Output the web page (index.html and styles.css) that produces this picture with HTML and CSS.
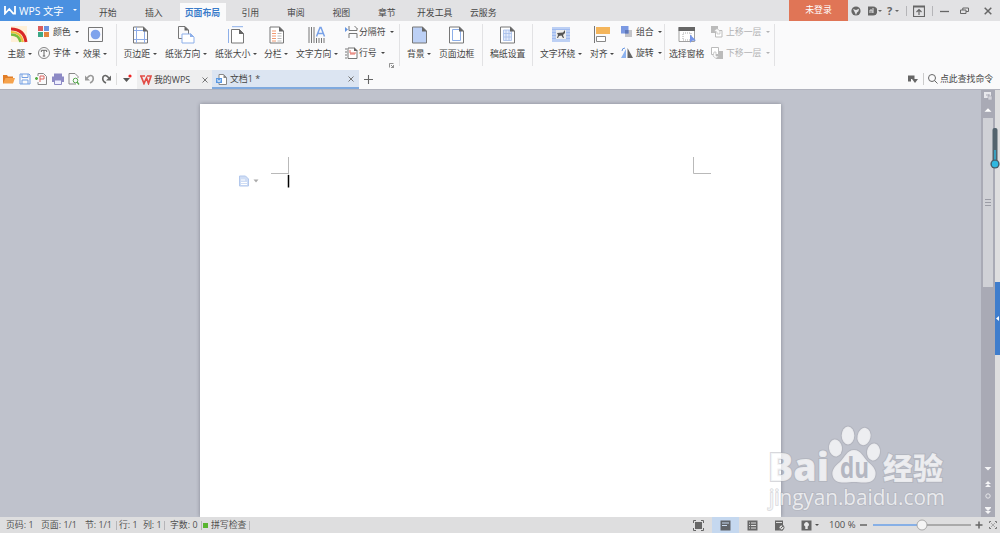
FILE: index.html
```html
<!DOCTYPE html>
<html lang="zh-CN">
<head>
<meta charset="utf-8">
<title>WPS 文字</title>
<link rel="stylesheet" href="styles.css">
</head>
<body>
<div class="app">
  <header class="titlebar">
    <div class="brand">
      <svg width="12" height="9" viewBox="0 0 12 9" fill="none" stroke="#fff" stroke-width="1.8"><path d="M1 0v7.500L5.300 3l4 4.500H11V0"/></svg>
      <span class="brand-name">WPS 文字</span><span class="brand-drop"><i class="arrow"></i></span>
    </div>
    <nav class="menu">
      <a>开始</a><a>插入</a><a class="active">页面布局</a><a>引用</a><a>审阅</a><a>视图</a><a>章节</a><a>开发工具</a><a>云服务</a>
    </nav>
    <div class="login">未登录</div>
    <div class="window-tools">
      <svg width="10" height="10" viewBox="0 0 10 10"><circle cx="5" cy="5" r="4.600" fill="#666"/><path d="M2 3l3 1 3-1.300-.5 2.500L6 6.500 5 9 3.600 6z" fill="#e2e2e4"/></svg>
      <span class="tool"><svg width="9" height="10" viewBox="0 0 9 10"><path d="M0 .500h5a4 4 0 0 1 0 9H0z" fill="#666"/><path d="M2 7V4h2v3M5 7V2" stroke="#e2e2e4" fill="none"/></svg><i class="arrow"></i></span>
      <span class="tool"><b>?</b><i class="arrow"></i></span>
      <i class="bar"></i>
      <svg width="12" height="12" viewBox="0 0 12 12" fill="none" stroke="#666"><path d="M.5 1h11v10.500H.5zM.5 2h11M6 10V4.500M3.500 7L6 4.500 8.500 7" stroke-width="1.200"/></svg>
      <i class="bar"></i>
      <svg width="9" height="10" viewBox="0 0 9 10"><path d="M0 5.500h9" stroke="#666" stroke-width="1.300"/></svg>
      <svg width="9" height="8" viewBox="0 0 9 8" fill="none" stroke="#666"><path d="M.5 3h5.500v3.500H.5zM2.800 3V1h5.700v3.500H6"/></svg>
      <svg width="8" height="8" viewBox="0 0 8 8"><path d="M.7.700l6.600 6.600M7.300.700L.7 7.300" stroke="#666" stroke-width="1.500"/></svg>
    </div>
  </header>

  <section class="ribbon">
    <div class="big"><svg width="17" height="17" viewBox="0 0 17 17" fill="none"><path d="M0 0h16v16H0z" fill="#fff0d8"/><path d="M0 3q13 0 15 13" stroke="#d92727" stroke-width="3"/><path d="M0 6q10 0 12 10" stroke="#f0bc37" stroke-width="2"/><path d="M0 8.500q8 0 9.500 7.500" stroke="#79bd3d" stroke-width="2.500"/></svg><span>主题<i class="arrow"></i></span></div>
    <div class="pair">
      <div class="small"><svg width="12" height="12" viewBox="0 0 12 12"><path d="M0 0h5v5H0z" fill="#d95c5c"/><path d="M6 0h5v5H6z" fill="#6a93e0"/><path d="M0 6h5v5H0z" fill="#3ca887"/><path d="M6 6h5v5H6z" fill="#e3843e"/></svg><span>颜色<i class="arrow"></i></span></div>
      <div class="small"><svg width="12" height="12" viewBox="0 0 12 12" fill="none" stroke="#666"><circle cx="6" cy="6" r="5.500" stroke-width=".8"/><path d="M3.300 5V3.300h5.400V5M6 3.300v6M4.800 9h2.400"/></svg><span>字体<i class="arrow"></i></span></div>
    </div>
    <div class="big"><svg width="17" height="17" viewBox="0 0 17 17"><path d="M1.500 1.500h14v14h-14z" fill="#f9f9fc" stroke="#777"/><circle cx="8.500" cy="8.500" r="4.800" fill="#7fa3ec"/></svg><span>效果<i class="arrow"></i></span></div>
    <i class="sep"></i>
    <div class="big"><svg width="17" height="18" viewBox="0 0 17 18" fill="none"><path d="M1.500 1h10l4 4v12h-14z" fill="#fff" stroke="#777"/><path d="M4.500 1v16M12.500 5v12M2 4.500h10M2 13.500h13" stroke="#8eace8"/><path d="M11 .500v5h5z" fill="#666"/></svg><span>页边距<i class="arrow"></i></span></div>
    <div class="big"><svg width="18" height="18" viewBox="0 0 18 18" fill="none"><path d="M5 12.500H1.500v-12H8l3.500 3.500v4" stroke="#777"/><path d="M7.500 0v4.500H12z" fill="#666"/><path d="M5 8h9l3 3v6H5z" fill="#fff" stroke="#8dafe9"/><path d="M13 7v4h4z" fill="#8dafe9"/></svg><span>纸张方向<i class="arrow"></i></span></div>
    <div class="big"><svg width="18" height="18" viewBox="0 0 18 18" fill="none"><path d="M5 .700h11M1.500 3v14" stroke="#8dafe9"/><path d="M4.500 3.500h8l4 4v9.500h-12z" fill="#fff" stroke="#777"/><path d="M12 3v5h5z" fill="#666"/></svg><span>纸张大小<i class="arrow"></i></span></div>
    <div class="big"><svg width="17" height="18" viewBox="0 0 17 18" fill="none"><path d="M2 1h9.500l4 4v12H2z" fill="#fff" stroke="#777"/><path d="M11 .500v5h5z" fill="#666"/><path d="M4 5h4M4 7.500h4M4 10h4M4 12.500h4M4 15h4" stroke="#f09a72"/><path d="M9.500 7.500h4M9.500 10h4M9.500 12.500h4M9.500 15h4" stroke="#bbb"/></svg><span>分栏<i class="arrow"></i></span></div>
    <div class="big"><svg width="18" height="18" viewBox="0 0 18 18" fill="none"><path d="M1 1v16M3.500 1v16M6 1v16M8.500 12v5M11 12v5M13.500 12v5M16 12v5" stroke="#777"/><path d="M8.500 10.500L12 1.500h1l3.500 9M10 7.500h5" stroke="#79a2e8" stroke-width="1.500"/></svg><span>文字方向<i class="arrow"></i></span></div>
    <div class="pair breaks">
      <div class="small"><svg width="13" height="12" viewBox="0 0 13 12" fill="none"><path d="M0 1l3 2.500L0 6z" fill="#6495e2"/><path d="M4 0v4.500h8V2M9.500 0L12 2.500M4 12V7.500h8V12" stroke="#777"/></svg><span>分隔符<i class="arrow"></i></span></div>
      <div class="small"><svg width="13" height="12" viewBox="0 0 13 12" fill="none"><path d="M3 1h6l3 3v7.500H3z" fill="#fff" stroke="#777"/><path d="M9 0v4h4z" fill="#666"/><path d="M0 2h2M0 5h2M0 8h2M0 11h2" stroke="#777"/><path d="M5 3v3h6M5 7h5" stroke="#e36c62"/></svg><span>行号<i class="arrow"></i></span></div>
      <svg class="launcher" width="5" height="5" viewBox="0 0 5 5"><path d="M.5 4.500v-4h4M2 2l2.500 2.500V2M2 4.500h2.500" fill="none" stroke="#777" stroke-width=".8"/></svg>
    </div>
    <i class="sep"></i>
    <div class="big"><svg width="17" height="18" viewBox="0 0 17 18"><path d="M1.500 1h10l4 4v12h-14z" fill="#bcd0f5" stroke="#777"/><path d="M11 .500v5h5z" fill="#666"/></svg><span>背景<i class="arrow"></i></span></div>
    <div class="big"><svg width="17" height="18" viewBox="0 0 17 18"><path d="M1.500 1h10l4 4v12h-14z" fill="#fff" stroke="#777"/><path d="M4.500 3.500h8v11h-8z" fill="#fff" stroke="#8dafe9"/><path d="M11 .500v5h5z" fill="#666"/></svg><span>页面边框</span></div>
    <i class="sep"></i>
    <div class="big"><svg width="17" height="18" viewBox="0 0 17 18"><path d="M1.500 1h10l4 4v12h-14z" fill="#fff" stroke="#777"/><path d="M4.500 4h8v10.500h-8zM4.500 7.500h8M4.500 11h8M7 4v10.500M10 4v10.500" fill="#e3ebfb" stroke="#a5bdea" stroke-width=".8"/><path d="M11 .500v5h5z" fill="#666"/></svg><span>稿纸设置</span></div>
    <i class="sep"></i>
    <div class="big"><svg width="18" height="17" viewBox="0 0 18 17"><path d="M0 1h18v15H0z" fill="#bdd0f4"/><path d="M0 3.500h18M0 6.500h18M0 9.500h18M0 12.500h18" stroke="#a0bbef"/><path d="M4 4h10v9H4z" fill="#eee"/><path d="M5 7l6-.500L13 4v3l-2 2 1 3h-1L9.500 9.500 7 10l-1 2H5l1-3z" fill="#555"/></svg><span>文字环绕<i class="arrow"></i></span></div>
    <div class="big"><svg width="18" height="17" viewBox="0 0 18 17"><path d="M1.500 0v17" stroke="#777"/><path d="M3 1h14v7H3z" fill="#f4b55b"/><path d="M3.500 10.500h9v5h-9z" fill="#fff" stroke="#888"/></svg><span>对齐<i class="arrow"></i></span></div>
    <div class="pair">
      <div class="small"><svg width="12" height="12" viewBox="0 0 12 12"><path d="M4 4h7v7H4z" fill="#c4c4c8"/><path d="M0 0h7.500v7.500H0z" fill="#7b99e2"/><path d="M4 4h3.500v3.500H4z" fill="#5e77b8"/></svg><span>组合<i class="arrow"></i></span></div>
      <div class="small"><svg width="12" height="12" viewBox="0 0 12 12"><path d="M5 2v9H0z" fill="#8db3f0"/><path d="M6.500 1v10H12z" fill="#666"/><path d="M1 4q0-3 3-3" fill="none" stroke="#6495e2"/></svg><span>旋转<i class="arrow"></i></span></div>
    </div>
    <i class="sep short"></i>
    <div class="big"><svg width="18" height="17" viewBox="0 0 18 17"><path d="M1 1.500h15.500v14H1z" fill="#fff" stroke="#888" stroke-width=".8"/><path d="M.5 1h16.500v4H.5z" fill="#666"/><path d="M5 7h8v7H5z" fill="none" stroke="#aaa" stroke-dasharray="1 1"/><path d="M12 8.500l6 6-4 .200-2 2.300z" fill="#7595e8"/></svg><span>选择窗格</span></div>
    <div class="pair disabled">
      <div class="small"><svg width="12" height="12" viewBox="0 0 12 12"><path d="M0 0h7v7H0z" fill="#bbb"/><path d="M4.500 4.500h6.500v6.500H4.500z" fill="#fff" stroke="#bbb"/><path d="M3 5l3-2.500L9 5v3H6V6z" fill="#fafafa" stroke="#bbb" stroke-width=".7"/></svg><span>上移一层<i class="arrow"></i></span></div>
      <div class="small"><svg width="12" height="12" viewBox="0 0 12 12"><path d="M5 4h7v8H5z" fill="#bbb"/><path d="M.5.500h7v7h-7z" fill="#fff" stroke="#bbb"/><path d="M3 5h2v4h3l-3 2.500L2 9z" fill="#fafafa" stroke="#bbb" stroke-width=".7"/></svg><span>下移一层<i class="arrow"></i></span></div>
    </div>
    <i class="sep"></i>
  </section>

  <section class="tabs">
    <div class="quick">
      <svg width="12" height="12" viewBox="0 0 12 12"><path d="M0 10.500V2h4l1 1.500h5V5" fill="#e17d27"/><path d="M0 10.500L2.500 5H12l-2 5.500z" fill="#f5a34e"/></svg>
      <svg width="12" height="12" viewBox="0 0 12 12" fill="none" stroke="#739fe3"><path d="M1 1h9l1 1v9H1zM3 1v3.500h6V1M3 11V7h6v4"/></svg>
      <svg width="12" height="12" viewBox="0 0 12 12" fill="none"><path d="M3 3V.500h5.500l3 3v8H3V9" stroke="#888"/><path d="M5 9V3h4v3H5" stroke="#de655e"/><path d="M0 5.500h3M1.500 4v3" stroke="#55ae46" stroke-width="1.500"/></svg>
      <svg width="12" height="12" viewBox="0 0 12 12"><path d="M2 .500h8v3H2zM0 3.500h12V9H0z" fill="#8d8ac5"/><path d="M2.500 7h7v4.500h-7z" fill="#eef" stroke="#8d8ac5"/></svg>
      <svg width="12" height="12" viewBox="0 0 12 12" fill="none"><path d="M8 11H1V.500h6l3 3V5" stroke="#888"/><circle cx="7.500" cy="7.500" r="2.300" stroke="#56a64c"/><path d="M9 9l2 2.500" stroke="#56a64c" stroke-width="1.300"/></svg>
      <svg width="12" height="12" viewBox="0 0 12 12" fill="none"><path d="M1 2.500v5h5z" fill="#999"/><path d="M3 5q4-4.500 6-1 1.200 4-3 6" stroke="#999" stroke-width="1.600"/></svg>
      <svg width="12" height="12" viewBox="0 0 12 12" fill="none"><path d="M11 2.500v5H6z" fill="#666"/><path d="M9 5Q5 .500 3 4q-1.200 4 3 6" stroke="#666" stroke-width="1.600"/></svg>
    </div>
    <i class="tab-sep"></i>
    <svg class="more" width="12" height="12" viewBox="0 0 12 12"><path d="M0 5h7L3.500 9z" fill="#555"/><circle cx="7" cy="3" r="1.600" fill="#e22"/></svg>
    <div class="tab home"><svg width="12" height="10" viewBox="0 0 12 10"><path d="M0 1h5M1 1l3 7.500L6.500 3 8.500 8.500 11 1H7" fill="none" stroke="#e24c46" stroke-width="1.700"/></svg><span>我的WPS</span><svg class="close" width="6" height="6" viewBox="0 0 6 6"><path d="M.5.500l5 5M5.500.500l-5 5" stroke="#777"/></svg></div>
    <div class="tab current"><svg width="11" height="11" viewBox="0 0 11 11"><path d="M3 .500h4.500l3 3v7H3z" fill="#fff" stroke="#888"/><path d="M7.500 0v4H11z" fill="#888"/><path d="M0 4h6v5H0z" fill="#5998e2"/><path d="M1.200 5l1 3L3 6l.8 2 1-3" fill="none" stroke="#fff" stroke-width=".6"/></svg><span>文档1 *</span><svg class="close" width="6" height="6" viewBox="0 0 6 6"><path d="M.5.500l5 5M5.500.500l-5 5" stroke="#777"/></svg></div>
    <svg class="add" width="9" height="9" viewBox="0 0 9 9"><path d="M0 4.500h9M4.500 0v9" stroke="#666" stroke-width="1.100"/></svg>
    <div class="finder"><svg width="10" height="8" viewBox="0 0 10 8"><path d="M0 .500h6.500V4H3v2.500H0zM4 4h6L7 8z" fill="#666"/></svg><i></i><svg width="10" height="10" viewBox="0 0 10 10"><circle cx="4" cy="4" r="3.500" fill="none" stroke="#666"/><path d="M6.500 6.500L9.500 9.500" stroke="#666"/></svg><span>点此查找命令</span></div>
  </section>

  <main class="workspace">
    <div class="sheet">
      <svg class="margins" width="581" height="100" viewBox="0 0 581 100"><path d="M88.500 53v17.500M71 69.500h17M493.500 53v16.500h17.500" fill="none" stroke="#b9b9b9"/><path d="M88.500 71v12.500" stroke="#000" stroke-width="1.500"/><path d="M39.500 72h6l3 3v7h-9z" fill="#cfddf5" stroke="#b3c8ec"/><path d="M41 76h4M41 78.500h6M41 80.500h6" stroke="#fff"/><path d="M53.500 75.500h5l-2.500 3z" fill="#aaa"/></svg>
    </div>
    <div class="scroll">
      <svg width="10" height="8" viewBox="0 0 10 8"><path d="M1 0h7v6H1z" fill="#e8e8ec"/><path d="M3 3h3M6 2v3" stroke="#aaaab6"/><path d="M5 4h4v4H5z" fill="#d5d5dc" stroke="#9999a5" stroke-width=".5"/></svg>
      <svg class="up" width="8" height="4" viewBox="0 0 8 4"><path d="M.5 3.800h7L4 .300z" fill="#fff"/></svg>
      <div class="thumb"><i></i><i></i><i></i></div>
      <svg class="nav" width="8" height="50" viewBox="0 0 8 50" fill="#f4f4f6"><path d="M.5 0h7L4 3.500zM1 17l3-3 3 3zM1 20l3-3 3 3zM1 41h6L4 44zM1 44h6l-3 3zM1 40h6v1H1z"/><circle cx="4" cy="29" r="2.200" fill="none" stroke="#e5e5e9"/></svg>
    </div>
    <div class="edge"><div class="handle"><svg width="3" height="5" viewBox="0 0 3 5"><path d="M3 0v5L0 2.500z" fill="#fff"/></svg></div></div>
    <svg class="gauge" width="10" height="42" viewBox="0 0 10 42"><rect x="2.500" y="0" width="5" height="38" rx="2" fill="#53636d"/><path d="M5 22v14" stroke="#35aed3" stroke-width="1.600"/><circle cx="5" cy="36" r="4.600" fill="#455e6b"/><circle cx="5" cy="36" r="3.200" fill="#2eb8e0"/></svg>
    <svg class="watermark" width="184" height="97" viewBox="0 0 184 97">
      <g class="mark">
        <text class="latin" x="3" y="61" textLength="61" lengthAdjust="spacingAndGlyphs">Bai</text>
        <ellipse cx="70.500" cy="28" rx="6.500" ry="8.500" transform="rotate(-8 70.500 28)"/><ellipse cx="83" cy="15.500" rx="6.300" ry="9"/><ellipse cx="99" cy="16.500" rx="6.500" ry="8.700" transform="rotate(12 99 16.500)"/><ellipse cx="108.500" cy="32" rx="6.500" ry="8.500" transform="rotate(8 108.500 32)"/>
        <path d="M89 30c-7 0-9 7-14 12-6 5-9 9-7 15 3 8 14 5 21 5s18 3 21-5c2-6-1-10-7-15-5-5-7-12-14-12z"/>
        <text class="cjk" x="118" y="59" textLength="60" lengthAdjust="spacingAndGlyphs">经验</text>
        <text class="url" x="4" y="85" textLength="176" lengthAdjust="spacingAndGlyphs">jingyan.baidu.com</text>
      </g>
      <text class="du" x="75" y="58" textLength="29" lengthAdjust="spacingAndGlyphs">du</text>
    </svg>
  </main>

  <footer class="status">
    <div class="facts"><span>页码: 1</span><span>页面: 1/1</span><span>节: 1/1</span><i></i><span>行: 1</span><span>列: 1</span><i></i><span>字数: 0</span><i></i><b></b><span>拼写检查</span><i></i></div>
    <div class="views">
      <div><svg width="11" height="11" viewBox="0 0 11 11"><path d="M2 2h7v7H2z" fill="#666"/><path d="M.5 3V.500H3M8 .500h2.500V3M10.500 8v2.500H8M3 10.500H.500V8" fill="none" stroke="#666"/></svg></div>
      <div class="selected"><svg width="11" height="11" viewBox="0 0 11 11"><path d="M.5.500h10v10H.500z" fill="#5f6368"/><path d="M2 3h7M2 5.500h5" stroke="#c7d9ef"/></svg></div>
      <div><svg width="11" height="11" viewBox="0 0 11 11"><path d="M.5.500h10v10H.500z" fill="#666"/><path d="M2 3h1M4 3h5M2 5.500h1M4 5.500h5M2 8h1M4 8h5" stroke="#ddd"/></svg></div>
      <div><svg width="11" height="11" viewBox="0 0 11 11"><path d="M1 .500h8v10H1z" fill="#666"/><path d="M2 2.500h6" stroke="#ddd"/><circle cx="7.500" cy="7.500" r="2.500" fill="#ddd" stroke="#666"/><path d="M6.500 8.500L9 6" stroke="#666"/></svg></div>
      <div class="read"><svg width="11" height="11" viewBox="0 0 11 11"><path d="M.5.500h10v10H.500z" fill="#666"/><path d="M4.300 6.500a2.300 2.300 0 1 1 2.400 0V9H4.300z" fill="#e8e8e8"/></svg><i class="arrow"></i></div>
    </div>
    <span class="percent">100 %</span>
    <svg class="zoom" width="139" height="12" viewBox="0 0 139 12"><path d="M0 6h7M115.500 6h7M119 2.500v7" stroke="#666" stroke-width="1.500"/><path d="M61 6h50" stroke="#999" stroke-width="1.600"/><path d="M13 6h48" stroke="#6aa1e8" stroke-width="1.600"/><circle cx="62" cy="6" r="5" fill="#f5f5f5" stroke="#999" stroke-width=".8"/><path d="M129.500 4V2.500H131M135 2.500h1.500V4M136.500 8v1.500H135M131 9.500h-1.500V8M131.500 4.500l1 1M134.500 4.500l-1 1M131.500 7.500l1-1M134.500 7.500l-1-1" fill="none" stroke="#777"/></svg>
  </footer>
</div>
</body>
</html>
```
FILE: styles.css
```css
* { box-sizing: border-box; }
body { margin: 0; }
svg { display: block; flex: none; }
i { font-style: normal; }

.app {
  width: 1000px;
  height: 533px;
  display: grid;
  grid-template-rows: 21px 48px 20px 428px 16px;
  overflow: hidden;
  background: #fafafb;
  color: #454545;
  font: 8.9px/12px "Open Sans", "Noto Sans CJK SC", sans-serif;
  white-space: nowrap;
}
.arrow {
  display: inline-block;
  flex: none;
  border: 2px solid transparent;
  border-top: 2.5px solid currentColor;
  border-bottom: 0;
}

.titlebar { display: flex; background: #e2e2e4; }
.brand { display: flex; align-items: center; width: 80px; height: 20.5px; padding-left: 4px; background: #4a90e0; color: #fff; }
.brand-name { width: 54px; padding: 1px 0 0 3px; font-size: 10.3px; }
.brand-drop { display: flex; align-items: center; height: 100%; padding-left: 3px; }
.menu {
  width: 709px;
  display: grid;
  grid-template-columns: 46px 34.5px 62px 45.5px 45.5px 45.5px 39px 53px 1fr;
  align-items: end;
  padding-left: 19px;
}
.menu a { height: 18px; line-height: 19px; }
.menu .active { width: 46px; background: #fafafb; color: #3b7cca; font-weight: 700; text-align: center; }
.login { width: 59px; height: 20.5px; line-height: 20px; text-align: center; background: #e07556; color: #fff; }
.window-tools {
  display: grid;
  grid-template-columns: 17px 19px 19px 7px 19px 8px 20px 24px 8px;
  align-items: center;
  padding-left: 3px;
  color: #666;
}
.tool { display: flex; align-items: center; gap: 1px; }
.tool b { width: 7px; font-size: 11px; }
.bar { width: 1px; height: 10px; background: #b5b5b8; }

.ribbon {
  display: grid;
  grid-template-columns: 30.5px 45px 33px 7.5px 41.5px 50px 49px 32px 49px 54px 8px 32px 43px 8px 42px 8px 50px 31px 43px 5px 42px 63px 1px;
  padding: 3px 0 0 7.5px;
}
.big { width: max-content; display: grid; grid-template-rows: 23px 13px; justify-items: center; align-content: start; }
.big span, .small span { display: flex; align-items: center; gap: 2.5px; }
.big svg { margin-top: 2px; }
.small span { gap: 4px; }
.pair { display: grid; grid-template-rows: 15px 21px 9px; align-content: start; }
.small { display: flex; align-items: center; gap: 3px; height: 12px; margin-top: 2px; }
.small + .small { margin-top: 8px; }
.breaks .small { gap: 1px; }
.launcher { margin: 3px 0 0 44px; }
.sep { width: 1px; height: 42px; background: #e2e2e4; }
.short { height: 36px; }
.disabled { color: #b2b2b4; }

.tabs { display: flex; align-items: center; }
.quick { width: 113px; display: flex; gap: 4.2px; padding-left: 3px; }
.tab-sep { width: 1px; height: 12px; margin: 0 6px 0 3px; background: #ddd; }
.more { margin-right: 2px; }
.tab { height: 19px; display: flex; align-items: center; align-self: start; margin-top: 1px; }
.home { width: 75px; padding: 0 4px 0 3px; gap: 2px; background: #eeeeef; }
.current { width: 146.5px; padding: 1px 5px 0 4px; gap: 3px; background: #dce5f2; border-bottom: 2px solid #7fa9de; }
.close { margin-left: auto; }
.add { margin-left: 5px; }
.finder { margin-left: auto; display: flex; align-items: center; width: 92px; }
.finder i { width: 1px; height: 12px; margin: 0 4px 0 5px; background: #ccc; }
.finder span { margin-left: 2px; }

.workspace { position: relative; display: grid; grid-template-columns: 981px 14px 5px; background: #bfc2cc; border-top: 1px solid #b1b3bd; }
.sheet { width: 581px; margin: 14px 0 0 200px; background: #fff; box-shadow: 0 0 4px #858893; clip-path: inset(-4px -4px 0 -4px); }
.scroll { background: #a9aab5; display: flex; flex-direction: column; align-items: center; padding-top: 2px; }
.up { margin-top: 8px; }
.thumb { width: 10px; height: 169px; margin-top: 6px; background: #d0d1d6; display: flex; flex-direction: column; align-items: center; justify-content: center; gap: 2px; }
.thumb i { width: 6px; height: 1px; background: #9b9ca5; }
.nav { margin-top: auto; }
.edge { background: #dededf; padding-top: 192px; }
.handle { height: 73px; background: #3f7dcc; display: flex; align-items: center; justify-content: center; }
.gauge { position: absolute; left: 990px; top: 38px; }
.watermark { position: absolute; left: 765px; top: 330px; }
.mark { fill: #fff; fill-opacity: .72; stroke: #a5a7af; stroke-opacity: .45; stroke-width: 2px; paint-order: stroke; }
.latin, .du { font: 800 39px "Open Sans", sans-serif; }
.du { font-size: 28px; font-weight: 700; fill: #b4b7c2; }
.cjk { font: 900 30px "Noto Sans CJK SC", sans-serif; }
.url { font: 21px "Open Sans", sans-serif; stroke-width: 1.5px; }

.status { display: flex; align-items: center; background: #dededf; color: #505050; }
.facts { width: 684px; display: grid; grid-template-columns: 35px 44px 30.5px 3.5px 24px 21px 6px 30.5px 2.5px 8px 38px 1px; align-items: center; padding-left: 6px; }
.facts i { width: 1px; height: 9px; background: #b5b5b8; }
.facts b { width: 5px; height: 5px; background: #58b530; }
.views { display: flex; width: 145px; height: 16px; }
.views div { width: 27px; display: flex; align-items: center; justify-content: center; }
.views .selected { background: #c5d8ef; }
.views .read { justify-content: flex-start; gap: 3px; padding-left: 8px; }
.views div:first-child { margin-left: 1px; }
.percent { width: 31px; font-size: 9.5px; }
```
